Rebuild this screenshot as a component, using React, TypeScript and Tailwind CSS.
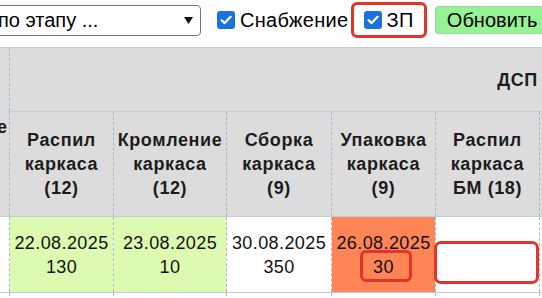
import type { ReactNode } from "react";

function Check() {
  return (
    <span className="inline-flex h-[18px] w-[18px] shrink-0 items-center justify-center rounded-[3px] bg-[#1b72dc]">
      <svg width="12" height="10" viewBox="0 0 12 10">
        <path
          d="M1.6 5.3 4.6 8.1 10.6 1.8"
          fill="none"
          stroke="white"
          strokeWidth="2.2"
          strokeLinecap="round"
          strokeLinejoin="round"
        />
      </svg>
    </span>
  );
}

const cell =
  "border border-dashed border-[#a9b8c8] [border-top-style:solid] [border-bottom-style:solid] [border-top-color:#c3cbd3] [border-bottom-color:#c3cbd3] px-[2px] text-center align-middle";

function Head({ children }: { children?: ReactNode }) {
  return (
    <th className={`${cell} bg-[#dcdcdc] text-[18px] font-bold leading-[24px] tracking-[0.6px] text-[#1c1c1c]`}>
      {children}
    </th>
  );
}

function Data({
  date,
  qty,
  bg = "bg-white",
  children,
}: {
  date?: string;
  qty?: string;
  bg?: string;
  children?: ReactNode;
}) {
  return (
    <td className={`${cell} relative ${bg} text-[18px] leading-[24px] tracking-[0.4px] text-[#111]`}>
      {date && <div>{date}</div>}
      {qty && <div>{qty}</div>}
      {children}
    </td>
  );
}

export default function App() {
  return (
    <div className="h-[298px] w-[542px] overflow-hidden bg-white font-['Liberation_Sans',Arial,sans-serif] text-black">
      {/* Toolbar */}
      <div className="flex h-[40px] items-center text-[20px] leading-none">
        <div className="-ml-[11px] flex h-[31px] w-[212px] shrink-0 items-center justify-between rounded-[4px] border border-[#767676] pl-[8px] pr-[7px]">
          <span>по этапу ...</span>
          <svg width="9" height="7" viewBox="0 0 9 7">
            <path d="M0 0h9L4.5 7z" fill="#111" />
          </svg>
        </div>
        <label className="ml-[16px] flex shrink-0 items-center gap-[5px] tracking-[0.3px]">
          <Check />
          Снабжение
        </label>
        <label className="ml-[3px] flex h-[36px] shrink-0 items-center gap-[4px] rounded-[6px] border-[3px] border-[#e3342c] pl-[10px] pr-[10px] tracking-[0.5px]">
          <Check />
          ЗП
        </label>
        <button className="ml-[8px] h-[28px] shrink-0 rounded-[3px] border border-[#9ad49a] bg-[#94f394] pl-[11px] pr-[10px] text-[20px]">
          Обновить
        </button>
      </div>

      {/* Table */}
      <div className="mt-[7px]">
        <table className="-ml-[91px] w-[1116px] table-fixed border-collapse">
          <colgroup>
            <col className="w-[100px]" />
            <col className="w-[104px]" />
            <col className="w-[113px]" />
            <col className="w-[105px]" />
            <col className="w-[104px]" />
            <col className="w-[104px]" />
            <col className="w-[486px]" />
          </colgroup>
          <thead>
            <tr className="h-[64px]">
              <th
                rowSpan={2}
                className={`${cell} bg-[#dcdcdc] pb-[10px] !pr-[2px] !text-right text-[18px] font-bold leading-[24px] text-[#1c1c1c]`}
              >
                отгрузке
              </th>
              <th
                colSpan={6}
                className={`${cell} bg-[#dcdcdc] text-[18px] font-bold leading-[24px] tracking-[0.6px] text-[#1c1c1c]`}
              >
                ДСП
              </th>
            </tr>
            <tr className="h-[105px]">
              <Head>
                Распил
                <br />
                каркаса
                <br />
                (12)
              </Head>
              <Head>
                Кромление
                <br />
                каркаса
                <br />
                (12)
              </Head>
              <Head>
                Сборка
                <br />
                каркаса
                <br />
                (9)
              </Head>
              <Head>
                Упаковка
                <br />
                каркаса
                <br />
                (9)
              </Head>
              <Head>
                Распил
                <br />
                каркаса
                <br />
                БМ (18)
              </Head>
              <Head />
            </tr>
          </thead>
          <tbody>
            <tr className="h-[76px]">
              <Data />
              <Data date="22.08.2025" qty="130" bg="bg-[#dcfbb0]" />
              <Data date="23.08.2025" qty="10" bg="bg-[#dcfbb0]" />
              <Data date="30.08.2025" qty="350" />
              <Data date="26.08.2025" qty="30" bg="bg-[#ff8456]">
                <span className="absolute left-[28px] top-[33px] h-[32px] w-[52px] rounded-[6px] border-[3px] border-[#e3342c]" />
              </Data>
              <Data>
                <span className="absolute -left-[2px] top-[24px] h-[43px] w-[105px] rounded-[7px] border-[3px] border-[#e3342c] bg-white" />
              </Data>
              <Data />
            </tr>
            <tr className="h-[30px]">
              <Data />
              <Data />
              <Data />
              <Data />
              <Data />
              <Data />
              <Data />
            </tr>
          </tbody>
        </table>
      </div>
    </div>
  );
}
